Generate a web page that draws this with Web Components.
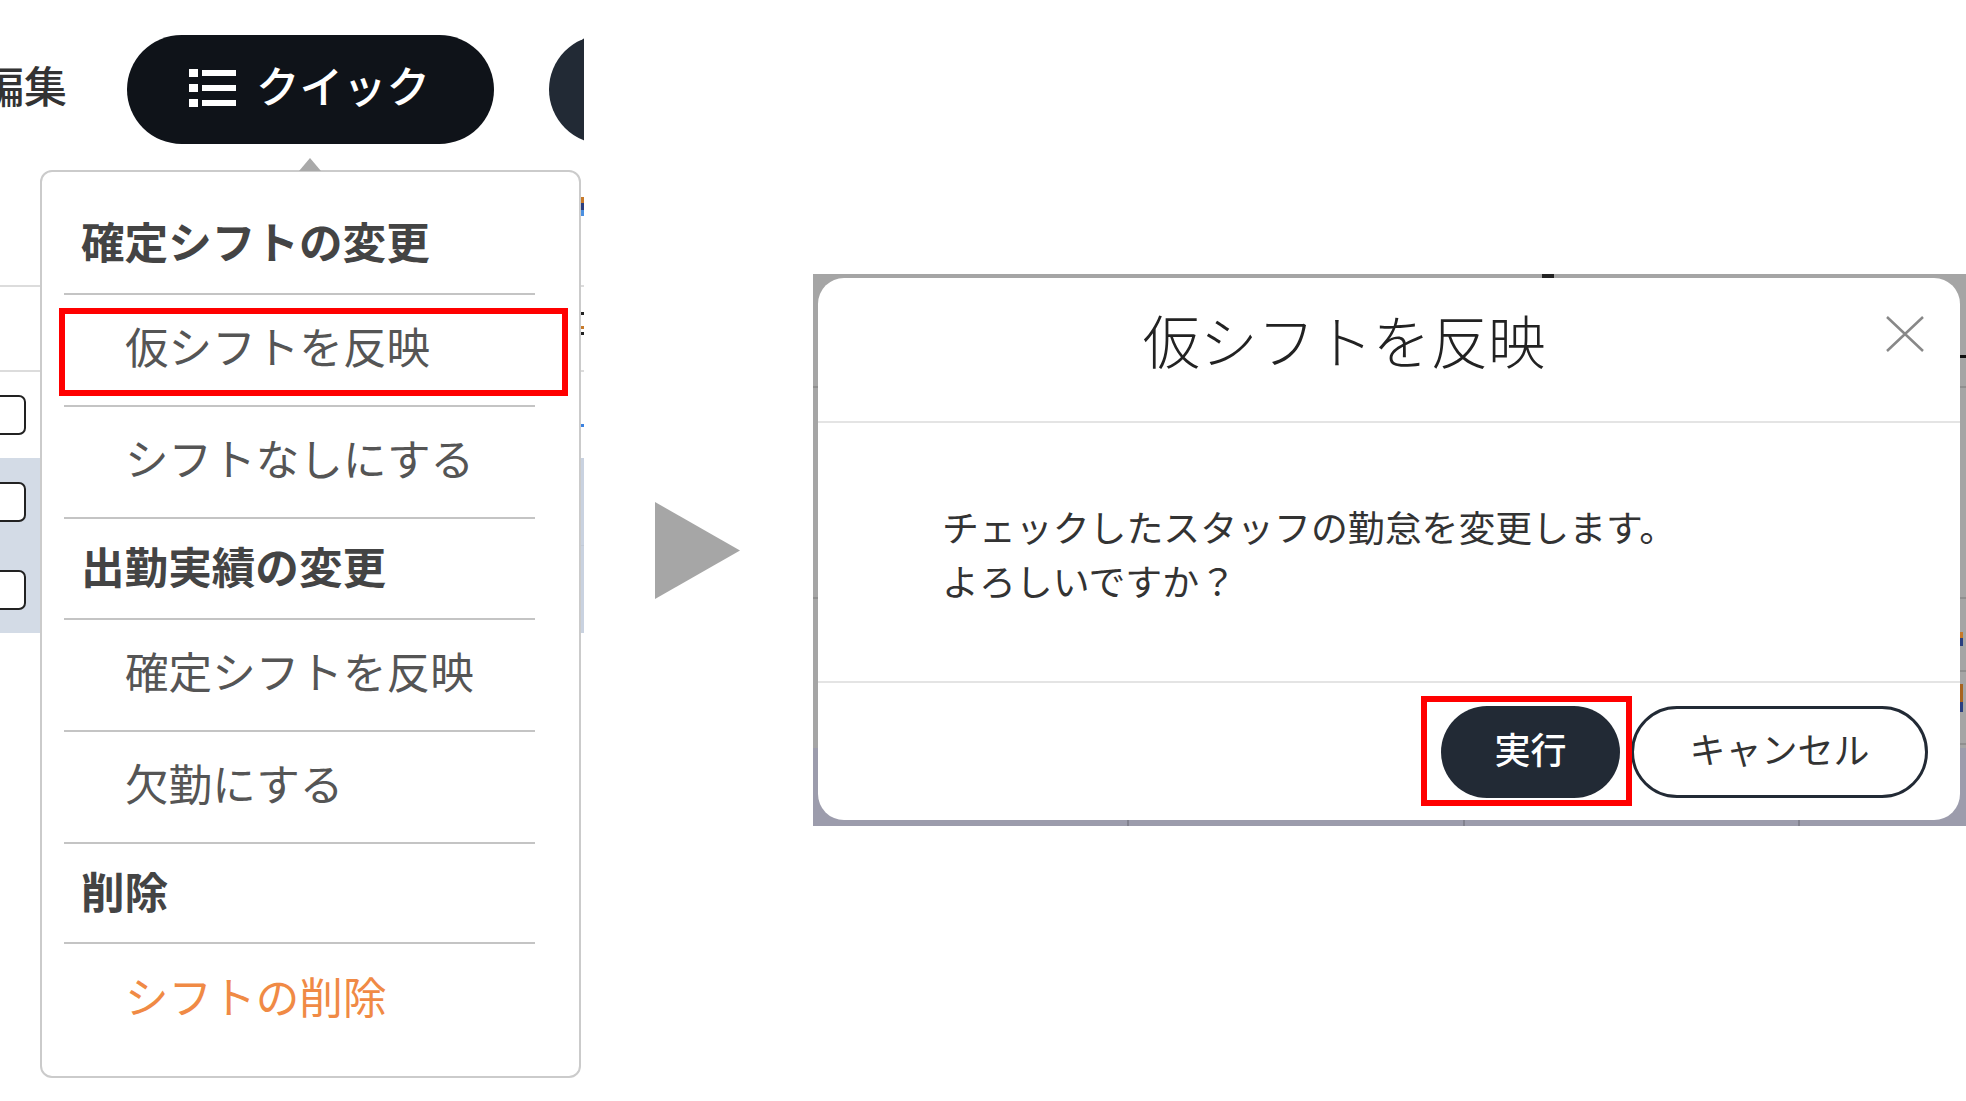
<!DOCTYPE html>
<html lang="ja">
<head>
<meta charset="utf-8">
<title>仮シフトを反映</title>
<style>
  html, body { margin: 0; padding: 0; background: #fff; }
  body { font-family: "Noto Sans CJK JP", "Noto Sans", sans-serif; color: #333; }
</style>
</head>
<body>
<shift-guide>
  <quick-panel slot="left">
    <quick-menu>
      <menu-head first>確定シフトの変更</menu-head>
      <menu-item marked>仮シフトを反映</menu-item>
      <menu-item>シフトなしにする</menu-item>
      <menu-head second>出勤実績の変更</menu-head>
      <menu-item>確定シフトを反映</menu-item>
      <menu-item>欠勤にする</menu-item>
      <menu-head>削除</menu-head>
      <menu-item danger last>シフトの削除</menu-item>
    </quick-menu>
  </quick-panel>
  <confirm-dialog slot="right" heading="仮シフトを反映">
    チェックしたスタッフの勤怠を変更します。<br>よろしいですか？
  </confirm-dialog>
</shift-guide>

<script>
const FONT = '"Noto Sans CJK JP", "Noto Sans", sans-serif';

// bits of the page behind, visible only at the edges: [x, y, w, h, colour]
function bits(list) {
  return list.map((b) => `<i class="bit" style="left:${b[0]}px;top:${b[1]}px;width:${b[2]}px;height:${b[3]}px;background:${b[4]}"></i>`).join('');
}

class ShiftGuide extends HTMLElement {
  constructor() {
    super();
    this.attachShadow({ mode: 'open' });
    this.shadowRoot.innerHTML = `
      <style>
        :host { display: flex; width: 1966px; height: 1101px; overflow: hidden; background: #fff; font-family: ${FONT}; }
        .arrow { flex: none; width: 85px; height: 97px; margin: 502px 0 0 71px; }
        .right { flex: none; margin: 274px 0 0 73px; }
      </style>
      <slot name="left"></slot>
      <svg class="arrow" viewBox="0 0 85 97"><path d="M0 0L85 48.5L0 97Z" fill="#a6a6a6"/></svg>
      <div class="right"><slot name="right"></slot></div>
    `;
  }
}

class QuickPanel extends HTMLElement {
  constructor() {
    super();
    this.attachShadow({ mode: 'open' });
    this.shadowRoot.innerHTML = `
      <style>
        :host { display: block; position: relative; flex: none; width: 584px; height: 1101px; overflow: hidden; }
        .bar { height: 285px; box-sizing: border-box; padding-top: 35px; display: flex; align-items: flex-start; }
        .edit { flex: none; width: 146px; margin-left: -19px; padding-top: 18px; font-size: 43px; line-height: 62px; font-weight: 500; color: #333; white-space: nowrap; }
        .quick { flex: none; width: 367px; height: 109px; border-radius: 55px; background: #0f1319; color: #fff; display: flex; align-items: center; padding-left: 62px; box-sizing: border-box; gap: 20px; font-size: 43.5px; font-weight: 500; }
        .quick svg { flex: none; width: 47px; height: 38px; margin-top: -4px; }
        .quick span { margin-top: -10px; }
        .round { flex: none; width: 109px; height: 109px; border-radius: 50%; background: #222a35; margin-left: 55px; }
        .row { box-sizing: border-box; height: 85px; border-top: 2px solid #dcdcdc; display: flex; align-items: center; }
        .row.tall { height: 88px; }
        .row.sel { background: #c9d2e0; height: 87px; border-top: none; }
        .row.sel + .row.sel { height: 88px; border-top: 1px solid #c2cad6; }
        .box { flex: none; position: relative; width: 36px; height: 36px; margin-left: -14px; border: 2.5px solid #222; border-radius: 7px; background: #fff; }
        .left { position: absolute; left: 0; width: 40px; top: 458px; height: 175px; background: #d3dbe6; }
        .bit { position: absolute; display: block; }
      </style>
      <div class="bar">
        <span class="edit">編集</span>
        <div class="quick">
          <svg viewBox="0 0 47 38" fill="#fff"><rect x="0" y="0" width="9" height="8"/><rect x="0" y="15" width="9" height="8"/><rect x="0" y="30" width="9" height="8"/><rect x="13" y="1" width="34" height="6"/><rect x="13" y="16" width="34" height="6"/><rect x="13" y="31" width="34" height="6"/></svg>
          <span>クイック</span>
        </div>
        <div class="round"></div>
      </div>
      <div class="row"></div>
      <div class="row tall"><div class="box"></div></div>
      <div class="row sel"><div class="left"></div><div class="box"></div></div>
      <div class="row sel"><div class="box"></div></div>
      ${bits([
        [581, 197, 3, 6, '#c77a2a'], [581, 203, 3, 7, '#2a3f80'], [581, 210, 3, 6, '#4a8fe0'],
        [581, 312, 3, 3, '#222'], [581, 326, 3, 3, '#c77a2a'], [581, 332, 3, 3, '#222'],
        [581, 424, 3, 3, '#3b82e0']
      ])}
      <slot></slot>
    `;
  }
}

class QuickMenu extends HTMLElement {
  constructor() {
    super();
    this.attachShadow({ mode: 'open' });
    this.shadowRoot.innerHTML = `
      <style>
        :host { display: flex; flex-direction: column; position: absolute; left: 40px; top: 170px; width: 541px; height: 908px; box-sizing: border-box; padding: 0 44px 0 22px; background: #fff; border: 2px solid #cbcbcb; border-radius: 12px; }
        .tip { position: absolute; left: 257px; top: -14px; width: 0; height: 0; border-left: 11px solid transparent; border-right: 11px solid transparent; border-bottom: 13px solid #a9a9a9; }
      </style>
      <div class="tip"></div>
      <slot></slot>
    `;
  }
}

class MenuHead extends HTMLElement {
  constructor() {
    super();
    this.attachShadow({ mode: 'open' });
    this.shadowRoot.innerHTML = `
      <style>
        :host { display: flex; align-items: center; flex: none; box-sizing: border-box; height: 100px; padding: 0 0 7px 17px; border-bottom: 2px solid #c4c4c4; font-size: 43.6px; font-weight: 700; color: #444; white-space: nowrap; }
        :host([first]) { height: 123px; padding: 14px 0 0 17px; }
        :host([second]) { height: 101px; }
      </style>
      <slot></slot>
    `;
  }
}

class MenuItem extends HTMLElement {
  constructor() {
    super();
    this.attachShadow({ mode: 'open' });
    this.shadowRoot.innerHTML = `
      <style>
        :host { display: flex; align-items: center; flex: none; position: relative; box-sizing: border-box; height: 112px; padding: 0 0 10px 61px; border-bottom: 2px solid #c4c4c4; font-size: 43.6px; font-weight: 400; color: #555; white-space: nowrap; }
        :host([danger]) { color: #f08a45; }
        :host([last]) { border-bottom: none; }
        .mark { display: none; position: absolute; left: -5px; top: 13px; width: 509px; height: 88px; box-sizing: border-box; border: 6px solid #f00; }
        :host([marked]) .mark { display: block; }
      </style>
      <slot></slot>
      <div class="mark"></div>
    `;
  }
}

class ConfirmDialog extends HTMLElement {
  constructor() {
    super();
    this.attachShadow({ mode: 'open' });
    this.shadowRoot.innerHTML = `
      <style>
        :host { display: block; position: relative; width: 1153px; height: 552px; box-sizing: border-box; padding: 4px 6px 6px 5px; background: linear-gradient(#a5a5a5 474px, #9c9cac 474px); font-family: ${FONT}; }
        .bit { position: absolute; display: block; }
        .card { display: flex; flex-direction: column; height: 100%; position: relative; background: #fff; border-radius: 26px; }
        header { flex: none; position: relative; height: 145px; display: flex; align-items: center; justify-content: center; padding: 0 90px 21px 0; box-sizing: border-box; border-bottom: 2px solid #e4e4e4; font-size: 57.6px; font-weight: 300; color: #222; }
        .close { position: absolute; left: 1068px; top: 38px; width: 38px; height: 36px; }
        .body { flex: 1; padding: 76px 0 0 124px; font-size: 36.9px; line-height: 54px; color: #333; border-bottom: 2px solid #e4e4e4; }
        footer { flex: none; height: 137px; box-sizing: border-box; padding: 23px 32px 0 0; display: flex; justify-content: flex-end; align-items: flex-start; gap: 11px; }
        button { font: inherit; height: 92px; border-radius: 46px; box-sizing: border-box; font-size: 36px; padding: 0 0 9px; }
        .run { width: 179px; background: #222a35; border: none; color: #fff; font-weight: 500; position: relative; }
        .cancel { width: 297px; background: #fff; border: 3.5px solid #222a35; color: #333; }
        .mark { position: absolute; left: -20px; top: -10px; width: 211px; height: 110px; box-sizing: border-box; border: 6px solid #f00; }
      </style>
      ${bits([
        [314, 546, 2, 6, '#82828f'], [650, 546, 2, 6, '#82828f'], [985, 546, 2, 6, '#82828f'],
        [729, 0, 12, 4, '#222'],
        [1147, 81, 6, 3, '#111'], [1147, 112, 6, 2, '#8f8f8f'], [1147, 323, 6, 2, '#8f8f8f'],
        [1147, 396, 6, 2, '#8f8f8f'], [1147, 469, 6, 2, '#8f8f8f'],
        [1147, 358, 3, 6, '#c77a2a'], [1147, 364, 3, 8, '#2a3f80'],
        [1147, 410, 3, 18, '#a86420'], [1147, 428, 3, 10, '#2a3f80'],
        [0, 112, 5, 2, '#8f8f8f'], [0, 323, 5, 2, '#8f8f8f']
      ])}
      <div class="card">
        <header>
          <span class="title"></span>
          <svg class="close" viewBox="0 0 38 36" fill="none" stroke="#888" stroke-width="2.5"><path d="M1 1L37 35M37 1L1 35"/></svg>
        </header>
        <div class="body"><slot></slot></div>
        <footer>
          <button class="run">実行<div class="mark"></div></button>
          <button class="cancel">キャンセル</button>
        </footer>
      </div>
    `;
    this.shadowRoot.querySelector('.title').textContent = this.getAttribute('heading');
  }
}

customElements.define('shift-guide', ShiftGuide);
customElements.define('quick-panel', QuickPanel);
customElements.define('quick-menu', QuickMenu);
customElements.define('menu-head', MenuHead);
customElements.define('menu-item', MenuItem);
customElements.define('confirm-dialog', ConfirmDialog);
</script>
</body>
</html>
